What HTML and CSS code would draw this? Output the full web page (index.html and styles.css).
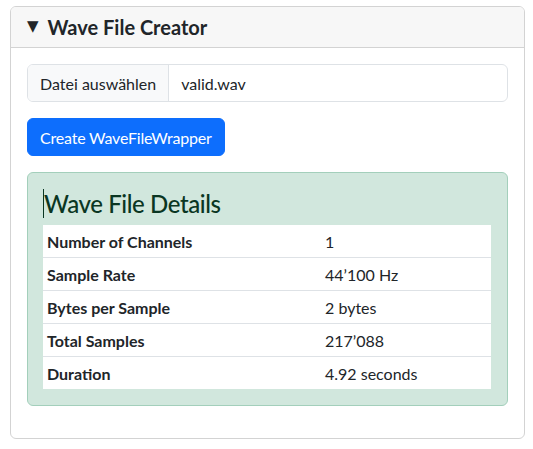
FILE: index.html
```html
<!DOCTYPE html>
<html lang="de">
<head>
<meta charset="utf-8">
<title>Wave File Creator</title>
<link rel="stylesheet" href="styles.css">
</head>
<body>
<div class="card">
  <div class="card-header"><span class="marker">▼</span>Wave File Creator</div>
  <div class="card-body">
    <div class="input-group">
      <span class="input-label">Datei auswählen</span>
      <span class="input-value">valid.wav</span>
    </div>
    <button class="btn">Create WaveFileWrapper</button>
    <div class="alert">
      <h4 class="alert-title"><span class="caret"></span>Wave File Details</h4>
      <table class="details">
        <tr><th>Number of Channels</th><td>1</td></tr>
        <tr><th>Sample Rate</th><td>44’100 Hz</td></tr>
        <tr><th>Bytes per Sample</th><td>2 bytes</td></tr>
        <tr><th>Total Samples</th><td>217’088</td></tr>
        <tr><th>Duration</th><td>4.92 seconds</td></tr>
      </table>
    </div>
  </div>
</div>
</body>
</html>
```
FILE: styles.css
```css
html, body {
  margin: 0;
  background: #fff;
}
body {
  padding: 6px 8px 0 10px;
  font-family: Lato, "Noto Sans", sans-serif;
  font-size: 16px;
  color: #212529;
}
.card {
  border: 1px solid #d3d3d3;
  border-radius: 6px;
  overflow: hidden;
}
.card-header {
  background: #f7f7f7;
  border-bottom: 1px solid #d3d3d3;
  height: 40px;
  display: flex;
  align-items: center;
  padding: 0 16px;
  font-size: 20px;
  font-weight: 700;
  color: #212529;
}
.marker {
  font-family: "DejaVu Sans", sans-serif;
  font-size: 15px;
  margin-right: 9px;
  margin-top: -2px;
}
.card-body {
  padding: 16px 16px 16px;
  display: flex;
  flex-direction: column;
  align-items: flex-start;
}
.input-group {
  align-self: stretch;
  display: flex;
  height: 36px;
  border: 1px solid #dee2e6;
  border-radius: 6px;
  overflow: hidden;
  margin-bottom: 16px;
}
.input-label {
  background: #f8f9fa;
  border-right: 1px solid #dee2e6;
  padding: 0 12px;
  display: flex;
  align-items: center;
}
.input-value {
  padding: 0 12px;
  display: flex;
  align-items: center;
}
.btn {
  font-family: inherit;
  font-size: 16px;
  color: #fff;
  background: #0d6efd;
  border: 1px solid #0d6efd;
  border-radius: 6px;
  height: 38px;
  padding: 0 12px;
  margin-bottom: 16px;
  letter-spacing: -0.2px;
}
.alert {
  align-self: stretch;
  background: #d1e7dd;
  border: 1px solid #a3cfbb;
  border-radius: 6px;
  padding: 16px;
  margin-bottom: 16px;
}
.alert-title {
  margin: 0 0 7px;
  font-size: 24px;
  font-weight: 500;
  line-height: 29px;
  letter-spacing: -0.4px;
  color: #0a3622;
}
.caret {
  display: inline-block;
  width: 1px;
  height: 29px;
  background: #0a3622;
  vertical-align: top;
  margin-left: -1px;
}
.details {
  width: calc(100% + 1px);
  margin-left: -1px;
  border-collapse: collapse;
  background: #fff;
}
.details th, .details td {
  height: 32px;
  padding: 0 4px;
  text-align: left;
  border-bottom: 1px solid #dee2e6;
}
.details tr:last-child th, .details tr:last-child td {
  border-bottom: 0;
}
.details th {
  width: 270px;
  font-weight: 700;
}
```
